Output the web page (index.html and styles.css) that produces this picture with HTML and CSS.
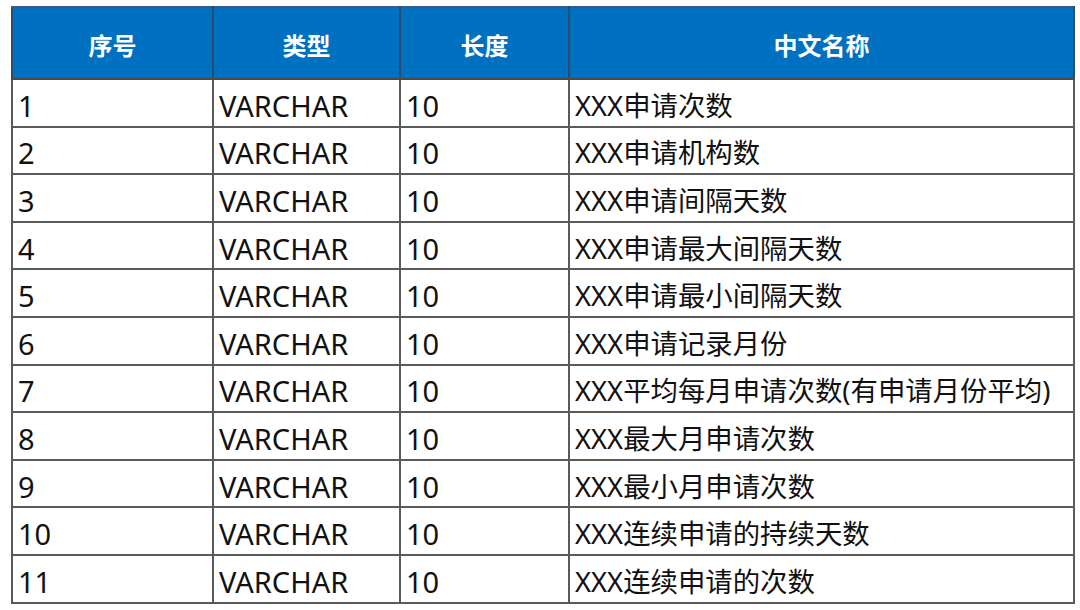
FILE: index.html
```html
<!DOCTYPE html>
<html lang="zh-CN">
<head>
<meta charset="utf-8">
<link rel="stylesheet" href="styles.css">
</head>
<body>
<table class="grid">
  <colgroup>
    <col class="c-no">
    <col class="c-type">
    <col class="c-len">
    <col class="c-name">
  </colgroup>
  <thead>
    <tr><th>序号</th><th>类型</th><th>长度</th><th>中文名称</th></tr>
  </thead>
  <tbody>
    <tr><td>1</td><td>VARCHAR</td><td>10</td><td class="cn">XXX申请次数</td></tr>
    <tr><td>2</td><td>VARCHAR</td><td>10</td><td class="cn">XXX申请机构数</td></tr>
    <tr><td>3</td><td>VARCHAR</td><td>10</td><td class="cn">XXX申请间隔天数</td></tr>
    <tr><td>4</td><td>VARCHAR</td><td>10</td><td class="cn">XXX申请最大间隔天数</td></tr>
    <tr><td>5</td><td>VARCHAR</td><td>10</td><td class="cn">XXX申请最小间隔天数</td></tr>
    <tr><td>6</td><td>VARCHAR</td><td>10</td><td class="cn">XXX申请记录月份</td></tr>
    <tr><td>7</td><td>VARCHAR</td><td>10</td><td class="cn">XXX平均每月申请次数(有申请月份平均)</td></tr>
    <tr><td>8</td><td>VARCHAR</td><td>10</td><td class="cn">XXX最大月申请次数</td></tr>
    <tr><td>9</td><td>VARCHAR</td><td>10</td><td class="cn">XXX最小月申请次数</td></tr>
    <tr><td>10</td><td>VARCHAR</td><td>10</td><td class="cn">XXX连续申请的持续天数</td></tr>
    <tr><td>11</td><td>VARCHAR</td><td>10</td><td class="cn">XXX连续申请的次数</td></tr>
  </tbody>
</table>
</body>
</html>
```
FILE: styles.css
```css
html, body {
  margin: 0;
  background: #ffffff;
}
body {
  padding: 6px 0 0 11px;
  font-family: "Noto Sans", "Noto Sans CJK SC", sans-serif;
}
.grid {
  border-collapse: collapse;
  table-layout: fixed;
  width: 1062px;
}
.c-no { width: 201px; }
.c-type { width: 187px; }
.c-len { width: 169px; }
.c-name { width: 505px; }
.grid th {
  height: 72px;
  padding: 2px 0 0 0;
  box-sizing: border-box;
  background: #0070c0;
  color: #ffffff;
  font-family: "Noto Sans CJK SC", sans-serif;
  font-weight: 700;
  font-size: 24px;
  text-align: center;
  vertical-align: middle;
  border: 2px solid #4a4a4a;
  border-top: 2px solid #3a5a80;
  border-left-color: #2a4a70;
  border-right-color: #2a4a70;
}
.grid td {
  height: 47.6px;
  padding: 6px 0 0 5px;
  box-sizing: border-box;
  font-size: 29px;
  line-height: 36px;
  color: #111111;
  vertical-align: middle;
  white-space: nowrap;
  border: 2px solid #5a5a5a;
}
.grid td.cn {
  font-size: 27.4px;
}
```
